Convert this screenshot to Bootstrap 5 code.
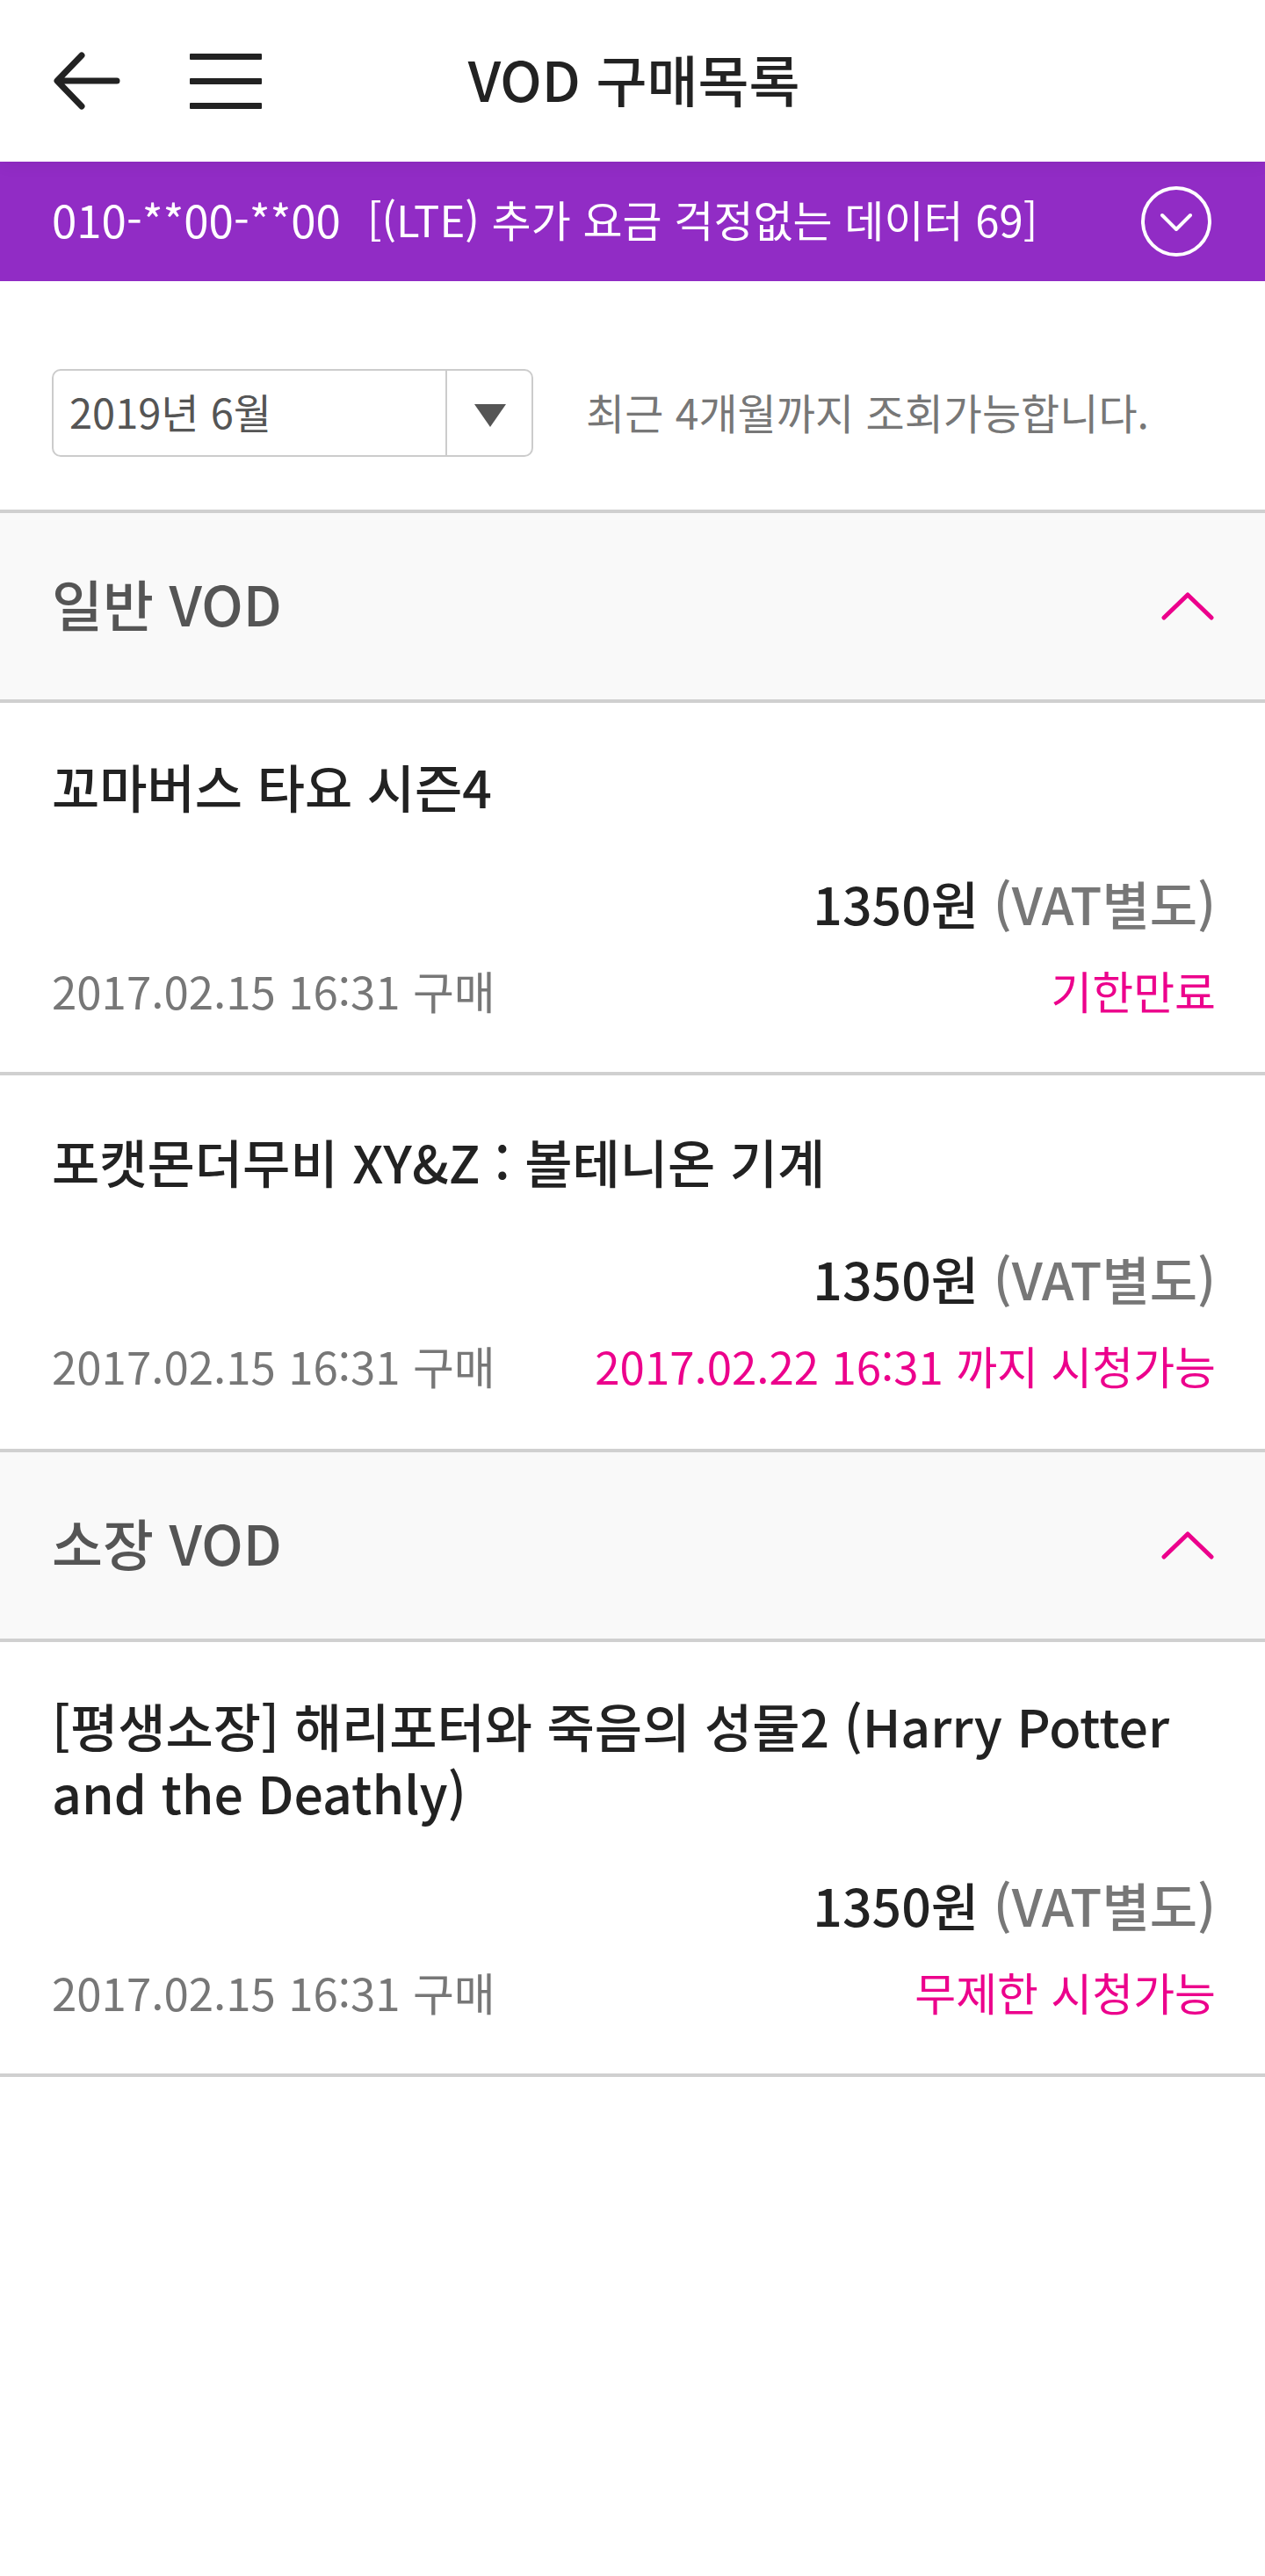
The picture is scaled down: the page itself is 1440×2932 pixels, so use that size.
<!DOCTYPE html>
<html lang="ko">
<head>
<meta charset="utf-8">
<meta name="viewport" content="width=device-width, initial-scale=1">
<title>VOD 구매목록</title>
<link href="https://cdn.jsdelivr.net/npm/bootstrap@5.3.0/dist/css/bootstrap.min.css" rel="stylesheet">
<style>
  body { font-family: "Noto Sans CJK KR", sans-serif; color: #222; background: #fff; }
  svg { display: block; fill: none; stroke: currentColor; stroke-linecap: round; stroke-linejoin: round; }
  .gutter { padding-left: 59px; padding-right: 56px; }

  .topbar { display: grid; grid-template-columns: 1fr auto 1fr; height: 184px; box-shadow: 0 0 20px rgba(0,0,0,.08); position: relative; z-index: 1; background: #fff; }
  .topbar-actions { gap: 75px; }
  .topbar-actions .btn { color: #222; }
  .topbar-title { font-size: 63px; line-height: 76px; font-weight: 500; padding-bottom: 6px; }

  .linebar { height: 136px; background: #912cc5; color: #fff; line-height: 76px; }
  .linebar-text { padding-bottom: 6px; }
  .linebar-number { font-size: 51px; }
  .linebar-plan { font-size: 49px; margin-left: 30px; }

  .filterbar { padding-top: 100px; padding-bottom: 60px; gap: 60px; }
  .month { width: 548px; }
  .month .form-select { height: 100px; padding: 0 110px 4px 18px; font-size: 47px; line-height: 76px; color: #555; border: 2px solid #ccc; border-radius: 10px; background: #fff; }
  .month-arrow { width: 100px; border-left: 2px solid #ccc; color: #555; pointer-events: none; padding-top: 6px; }
  .month-arrow svg { fill: currentColor; stroke: none; }
  .hint { font-size: 48px; line-height: 76px; color: #777; padding-bottom: 4px; }

  .group-head { height: 220px; border-top: 4px solid #d0d0d0; border-bottom: 4px solid #d0d0d0; background: #f9f9f9; color: #555; }
  .group-title { font-size: 63px; line-height: 76px; font-weight: 500; padding-bottom: 8px; }
  .pink { color: #ec008c; }

  .vod { padding-top: 57px; padding-bottom: 55px; line-height: 76px; }
  .vod + .vod { border-top: 4px solid #d0d0d0; padding-top: 60px; padding-bottom: 57px; }
  .vod-title { font-size: 59px; line-height: 76px; font-weight: 500; margin-bottom: 57px; }
  .vod-title-long { margin-bottom: 52px; }
  .vod-price { font-size: 59px; font-weight: 500; margin-bottom: 23px; }
  .vod-meta { font-size: 51px; }
  .dim { color: #777; }
  .list-end { border-bottom: 4px solid #d0d0d0; }
</style>
</head>
<body>
<header class="topbar gutter align-items-center">
  <div class="topbar-actions d-flex align-items-center">
    <button type="button" class="btn p-0 border-0" aria-label="뒤로">
      <svg width="80" height="72" viewBox="0 0 80 72" stroke-width="7"><path d="M34 7 6 36 34 65M7 36H74"/></svg>
    </button>
    <button type="button" class="btn p-0 border-0" aria-label="메뉴">
      <svg width="84" height="72" viewBox="0 0 84 72"><path d="M3 5h80a1 1 0 0 1 1 1v5a1 1 0 0 1-1 1H3a1 1 0 0 1-1-1V6a1 1 0 0 1 1-1zM3 33h80a1 1 0 0 1 1 1v5a1 1 0 0 1-1 1H3a1 1 0 0 1-1-1v-5a1 1 0 0 1 1-1zM3 61h80a1 1 0 0 1 1 1v5a1 1 0 0 1-1 1H3a1 1 0 0 1-1-1v-5a1 1 0 0 1 1-1z" fill="currentColor" stroke="none"/></svg>
    </button>
  </div>
  <h1 class="topbar-title m-0">VOD 구매목록</h1>
</header>

<div class="linebar gutter d-flex align-items-center justify-content-between">
  <div class="linebar-text d-flex align-items-center">
    <span class="linebar-number">010-**00-**00</span>
    <span class="linebar-plan">[(LTE) 추가 요금 걱정없는 데이터 69]</span>
  </div>
  <button type="button" class="btn p-0 border-0 text-white" aria-label="회선 선택">
    <svg width="86" height="84" viewBox="0 0 86 84" stroke-width="4"><circle cx="41" cy="42" r="38"/><path d="M25 35 41 51 57 35"/></svg>
  </button>
</div>

<main>
  <div class="filterbar gutter d-flex align-items-center">
    <div class="month position-relative">
      <select id="month" class="form-select">
        <option>2019년 6월</option><option>2019년 5월</option><option>2019년 4월</option><option>2019년 3월</option>
      </select>
      <span class="month-arrow position-absolute top-0 bottom-0 end-0 d-flex align-items-center justify-content-center">
        <svg width="36" height="28" viewBox="0 0 36 28"><path d="M0 1h36L18 27z"/></svg>
      </span>
    </div>
    <label for="month" class="hint">최근 4개월까지 조회가능합니다.</label>
  </div>

  <section>
    <button type="button" class="group-head gutter d-flex align-items-center justify-content-between w-100 border-start-0 border-end-0 text-start" data-bs-toggle="collapse" data-bs-target="#general" aria-expanded="true" aria-controls="general">
      <span class="group-title">일반 VOD</span>
      <svg class="pink" width="64" height="32" viewBox="0 0 64 32" stroke-width="5"><path d="M5 29 32 3 59 29"/></svg>
    </button>
    <div id="general" class="collapse show">
      <article class="vod gutter">
        <h2 class="vod-title">꼬마버스 타요 시즌4</h2>
        <div class="vod-price text-end">1350원 <span class="dim">(VAT별도)</span></div>
        <div class="vod-meta d-flex justify-content-between"><span class="dim">2017.02.15 16:31 구매</span><span class="pink">기한만료</span></div>
      </article>
      <article class="vod gutter">
        <h2 class="vod-title">포캣몬더무비 XY&amp;Z : 볼테니온 기계</h2>
        <div class="vod-price text-end">1350원 <span class="dim">(VAT별도)</span></div>
        <div class="vod-meta d-flex justify-content-between"><span class="dim">2017.02.15 16:31 구매</span><span class="pink">2017.02.22 16:31 까지 시청가능</span></div>
      </article>
    </div>
  </section>

  <section class="list-end">
    <button type="button" class="group-head gutter d-flex align-items-center justify-content-between w-100 border-start-0 border-end-0 text-start" data-bs-toggle="collapse" data-bs-target="#owned" aria-expanded="true" aria-controls="owned">
      <span class="group-title">소장 VOD</span>
      <svg class="pink" width="64" height="32" viewBox="0 0 64 32" stroke-width="5"><path d="M5 29 32 3 59 29"/></svg>
    </button>
    <div id="owned" class="collapse show">
      <article class="vod gutter">
        <h2 class="vod-title vod-title-long">[평생소장] 해리포터와 죽음의 성물2 (Harry Potter and the Deathly)</h2>
        <div class="vod-price text-end">1350원 <span class="dim">(VAT별도)</span></div>
        <div class="vod-meta d-flex justify-content-between"><span class="dim">2017.02.15 16:31 구매</span><span class="pink">무제한 시청가능</span></div>
      </article>
    </div>
  </section>
</main>
<script src="https://cdn.jsdelivr.net/npm/bootstrap@5.3.0/dist/js/bootstrap.bundle.min.js"></script>
</body>
</html>
